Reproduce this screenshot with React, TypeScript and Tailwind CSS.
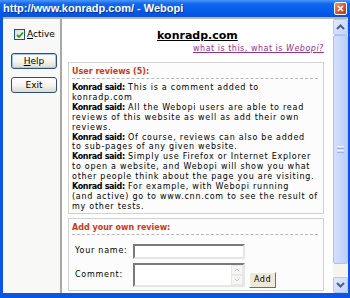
import React from "react";

function Said() {
  return <span className="font-bold tracking-[-0.35px]">Konrad said:</span>;
}

function Chevron({ up }: { up?: boolean }) {
  return (
    <svg width="9" height="6" viewBox="0 0 9 6">
      {up ? (
        <polyline points="1,5 4.5,1.5 8,5" fill="none" stroke="#4d6185" strokeWidth="2" />
      ) : (
        <polyline points="1,1 4.5,4.5 8,1" fill="none" stroke="#4d6185" strokeWidth="2" />
      )}
    </svg>
  );
}

function SBtn({ up }: { up?: boolean }) {
  return (
    <div className="h-[16px] shrink-0 rounded-[2px] border border-[#b4c7f3] bg-[linear-gradient(to_bottom_right,#e2eafe,#c2d3fc)] flex items-center justify-center">
      <Chevron up={up} />
    </div>
  );
}

function XPButton({ children, focused, className }: { children: React.ReactNode; focused?: boolean; className?: string }) {
  return (
    <div
      className={
        "w-[46px] h-[16px] rounded-[3px] border border-[#2b4f86] bg-[linear-gradient(to_bottom,#ffffff,#f4f3ee_55%,#dcd8cc)] flex items-center justify-center text-[9px] leading-none text-black " +
        (focused ? "shadow-[inset_0_0_0_1px_#a9c6f2] " : "") +
        (className ?? "")
      }
    >
      {children}
    </div>
  );
}

export default function App() {
  return (
    <div className="w-[350px] h-[298px] flex flex-col overflow-hidden bg-[#0a56e3] font-['DejaVu_Sans',Verdana,sans-serif]">
      {/* Title bar */}
      <div className="h-[17px] shrink-0 flex items-center pl-[3px] pr-[3px] bg-[linear-gradient(to_bottom,#4c97fa_0%,#1168ee_22%,#065be8_65%,#0452de_100%)]">
        <span className="flex-1 text-white font-bold text-[11px] leading-none font-['Liberation_Sans',Arial,sans-serif] [text-shadow:1px_1px_0_#0c3394]">
          http://www.konradp.com/ - Webopi
        </span>
        <div className="w-[13px] h-[13px] rounded-[2px] border border-white bg-[linear-gradient(to_bottom_right,#ef9a76,#d7542c_55%,#b83a16)] flex items-center justify-center">
          <svg width="7" height="7" viewBox="0 0 7 7">
            <path d="M1 1 L6 6 M6 1 L1 6" stroke="white" strokeWidth="1.6" />
          </svg>
        </div>
      </div>

      {/* Client */}
      <div className="flex-1 min-h-0 flex pl-[3px] pr-[4px] pb-[5px]">
        <div className="flex-1 min-h-0 flex border-t-2 border-[#b9b6aa]">
          {/* Left panel */}
          <div className="w-[59px] shrink-0 bg-[#f8f8f6] border-r-2 border-[#a8a7a1] flex flex-col pl-[8px] pt-[10px]">
            <div className="flex items-center ml-[3px] h-[11px] gap-[2px]">
              <div className="w-[11px] h-[11px] border border-[#1c5180] bg-[linear-gradient(to_bottom_right,#dcdcd7,#ffffff)] flex items-center justify-center">
                <svg width="8" height="8" viewBox="0 0 8 8">
                  <path d="M1 4 L3 6 L7 1.5" fill="none" stroke="#21a121" strokeWidth="1.8" />
                </svg>
              </div>
              <span className="text-[9px] leading-none text-black">
                <span className="underline">A</span>ctive
              </span>
            </div>
            <XPButton focused className="mt-[13px]">
              <span>
                <span className="underline">H</span>elp
              </span>
            </XPButton>
            <XPButton className="mt-[8px]">
              <span>Exit</span>
            </XPButton>
          </div>

          {/* Content */}
          <div className="flex-1 min-w-0 bg-white flex flex-col overflow-hidden">
            <div className="pt-[10px] text-center text-[11px] leading-[13px] font-bold underline text-black">konradp.com</div>
            <div className="mt-[2px] pr-[9px] text-right text-[8px] leading-[10px] tracking-[0.5px] text-[#93338f] underline">
              what is this, what is <i>Webopi?</i>
            </div>

            {/* Reviews box */}
            <div className="ml-[6px] mr-[9px] mt-[8px] border border-[#d2d2d2] bg-[#fcfcfc] pl-[3px] pr-[5px] pt-[4px] pb-[1px]">
              <div className="text-[8px] leading-[10px] font-bold text-[#cc3b14] border-b border-dashed border-[#b9b9b9] pb-[1px]">
                User reviews (5):
              </div>
              <div className="mt-[4px] text-[8px] leading-[9.9px] tracking-[0.75px] text-black whitespace-nowrap">
                <div>
                  <Said /> This is a comment added to
                </div>
                <div>konradp.com</div>
                <div>
                  <Said /> All the Webopi users are able to read
                </div>
                <div>reviews of this website as well as add their own</div>
                <div>reviews.</div>
                <div>
                  <Said /> Of course, reviews can also be added
                </div>
                <div>to sub-pages of any given website.</div>
                <div>
                  <Said /> Simply use Firefox or Internet Explorer
                </div>
                <div>to open a website, and Webopi will show you what</div>
                <div>other people think about the page you are visiting.</div>
                <div>
                  <Said /> For example, with Webopi running
                </div>
                <div>(and active) go to www.cnn.com to see the result of</div>
                <div>my other tests.</div>
              </div>
            </div>

            {/* Add review box */}
            <div className="ml-[6px] mr-[9px] mt-[4px] border border-[#d2d2d2] bg-[#fcfcfc] pl-[3px] pr-[5px] pt-[4px] pb-[3px]">
              <div className="text-[8px] leading-[10px] font-bold text-[#cc3b14] border-b border-dashed border-[#b9b9b9] pb-[1px]">
                Add your own review:
              </div>
              <div className="mt-[9px] pl-[3px] flex flex-col gap-[4px] text-[8px] tracking-[0.75px] text-black">
                <div className="flex items-center">
                  <span className="w-[58px] shrink-0">Your name:</span>
                  <div className="w-[112px] h-[15px] border-2 border-t-[#7a7a7a] border-l-[#7a7a7a] border-b-[#e6e6e6] border-r-[#e6e6e6] bg-white" />
                </div>
                <div className="flex items-end">
                  <div className="flex items-center self-stretch">
                    <span className="w-[58px] shrink-0">Comment:</span>
                  </div>
                  <div className="w-[112px] h-[24px] border-2 border-t-[#7a7a7a] border-l-[#7a7a7a] border-b-[#e6e6e6] border-r-[#e6e6e6] bg-white flex justify-end">
                    <div className="w-[12px] flex flex-col">
                      <div className="h-[10px] border border-[#e8e8e4] bg-[#f7f7f4] flex items-center justify-center">
                        <svg width="6" height="4" viewBox="0 0 6 4">
                          <polyline points="0.5,3.5 3,1 5.5,3.5" fill="none" stroke="#c8c8c4" strokeWidth="1" />
                        </svg>
                      </div>
                      <div className="h-[10px] border border-[#e8e8e4] bg-[#f7f7f4] flex items-center justify-center">
                        <svg width="6" height="4" viewBox="0 0 6 4">
                          <polyline points="0.5,0.5 3,3 5.5,0.5" fill="none" stroke="#c8c8c4" strokeWidth="1" />
                        </svg>
                      </div>
                    </div>
                  </div>
                  <div className="ml-[4px] mb-[-1px] w-[27px] h-[16px] border border-t-white border-l-white border-b-[#716f64] border-r-[#716f64] bg-[#ece9d8] flex items-center justify-center text-[8px] tracking-[0.5px]">
                    Add
                  </div>
                </div>
              </div>
            </div>
          </div>

          {/* Scrollbar */}
          <div className="w-[15px] shrink-0 flex flex-col bg-[#f5f4ee]">
            <SBtn up />
            <div className="h-[229px] shrink-0 rounded-[2px] border border-[#aec2f2] bg-[linear-gradient(to_right,#d3dffd,#bccffa)] flex flex-col items-center justify-center gap-[1px]">
              <div className="w-[7px] h-[1px] bg-[#eef3fe]" />
              <div className="w-[7px] h-[1px] bg-[#9fb5ea]" />
              <div className="w-[7px] h-[1px] bg-[#eef3fe]" />
              <div className="w-[7px] h-[1px] bg-[#9fb5ea]" />
            </div>
            <div className="flex-1" />
            <SBtn />
          </div>
        </div>
      </div>
    </div>
  );
}
